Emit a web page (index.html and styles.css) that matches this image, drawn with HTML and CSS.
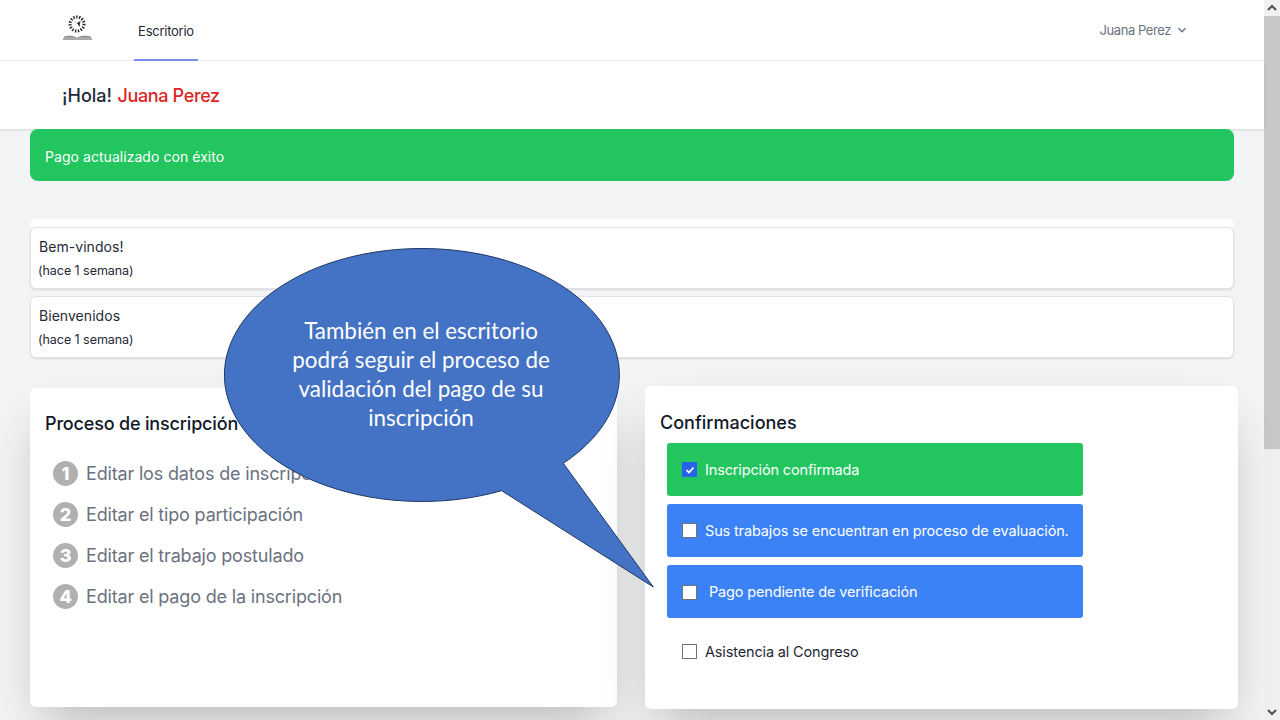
FILE: index.html
```html
<!DOCTYPE html>
<html lang="es">
<head>
<meta charset="utf-8">
<title>Escritorio</title>
<link rel="stylesheet" href="styles.css">
</head>
<body>
<div class="window">
  <div class="page">
    <nav class="nav">
      <div class="logo">
        <svg width="32" height="28" viewBox="0 0 32 28">
          <circle cx="15" cy="11" r="7" fill="none" stroke="#2a2a2a" stroke-width="3" stroke-dasharray="1.4 1.5"/>
          <path d="M10.500 6.500 15 10l3.500-2-1 6-2-3.200z" fill="#333"/>
          <path d="M2 23.500c4-1 9-1 13 1 4-2 9-2 14-1v1.200H2z" fill="#8a8a8a"/>
          <path d="M1 26h29" stroke="#555" stroke-width="1"/>
        </svg>
      </div>
      <a class="nav-link">Escritorio</a>
      <div class="user">Juana Perez
        <svg class="user-chev" width="10" height="10" viewBox="0 0 10 10"><path d="M1.500 3.200 5 6.700l3.500-3.500" fill="none" stroke="#6b7280" stroke-width="1.500"/></svg>
      </div>
    </nav>
    <header class="hero"><h1 class="greet"><span class="hello">¡Hola!</span> <span class="red">Juana Perez</span></h1></header>
    <main class="content">
      <div class="alert">Pago actualizado con éxito</div>
      <section class="notices">
        <div class="notice"><p class="notice-title">Bem-vindos!</p><p class="notice-time">(hace 1 semana)</p></div>
        <div class="notice"><p class="notice-title">Bienvenidos</p><p class="notice-time">(hace 1 semana)</p></div>
      </section>
      <div class="cards">
        <section class="card card-left">
          <h2 class="card-title">Proceso de inscripción</h2>
          <ol class="steps">
            <li class="step"><span class="num">1</span>Editar los datos de inscripción</li>
            <li class="step"><span class="num">2</span>Editar el tipo participación</li>
            <li class="step"><span class="num">3</span>Editar el trabajo postulado</li>
            <li class="step"><span class="num">4</span>Editar el pago de la inscripción</li>
          </ol>
        </section>
        <section class="card card-right">
          <h2 class="card-title conf-title">Confirmaciones</h2>
          <div class="confs">
            <div class="conf green"><span class="box checked"><svg width="10" height="10" viewBox="0 0 10 10"><path d="M1.500 5.200 4 7.500l4.500-5" fill="none" stroke="#fff" stroke-width="1.800"/></svg></span>Inscripción confirmada</div>
            <div class="conf blue"><span class="box"></span>Sus trabajos se encuentran en proceso de evaluación.</div>
            <div class="conf blue pending"><span class="box"></span>Pago pendiente de verificación</div>
            <div class="conf plain"><span class="box"></span>Asistencia al Congreso</div>
          </div>
        </section>
      </div>
    </main>
  </div>
  <div class="scrollbar">
    <div class="sb-btn"><svg width="10" height="8" viewBox="0 0 10 8"><path d="M1 6l4-4 4 4" fill="none" stroke="#505050" stroke-width="2"/></svg></div>
    <div class="sb-thumb"></div>
    <div class="sb-track"></div>
    <div class="sb-btn"><svg width="10" height="8" viewBox="0 0 10 8"><path d="M1 2l4 4 4-4" fill="none" stroke="#505050" stroke-width="2"/></svg></div>
  </div>
  <div class="callout">
    <svg class="callout-shape" width="460" height="360" viewBox="0 0 460 360">
      <path d="M340.300 215.300A197.500 126.500 0 1 0 278.700 242.700L430.300 339Z" fill="#4472c4" stroke="#1f3864" stroke-width="1"/>
    </svg>
    <p class="callout-text">También en el escritorio podrá seguir el proceso de validación del pago de su inscripción</p>
  </div>
</div>
</body>
</html>
```
FILE: styles.css
```css
* { box-sizing: border-box; }
html, body { margin: 0; padding: 0; height: 100%; overflow: hidden; }
body { font-family: Inter, "Liberation Sans", sans-serif; color: #1f2937; }
p, h1, h2, ol { margin: 0; padding: 0; }
.window { position: relative; display: flex; width: 1280px; height: 720px; background: #f3f4f6; overflow: hidden; }
.page { flex: 1; min-width: 0; display: flex; flex-direction: column; }

.nav { height: 61px; flex: none; display: flex; align-items: stretch; background: #fff; border-bottom: 1px solid #f0f1f3; padding-left: 62px; }
.logo { width: 72px; display: flex; align-items: flex-start; padding-top: 13px; }
.nav-link { width: 64px; height: 61px; display: flex; align-items: center; justify-content: center; font-size: 13px; letter-spacing: -.25px; color: #1f2937; border-bottom: 2px solid #818cf8; padding-top: 3px; }
.user { margin-left: auto; margin-right: 77px; display: flex; align-items: center; gap: 6px; font-size: 13px; letter-spacing: -.42px; color: #6b7280; padding-bottom: 1px; }
.user-chev { margin-top: 0; }

.hero { height: 68px; flex: none; display: flex; align-items: center; padding-left: 62px; background: #fff; box-shadow: 0 1px 3px rgba(0,0,0,.12); position: relative; }
.greet { font-size: 18px; font-weight: 500; line-height: 28px; letter-spacing: -.35px; color: #1f2937; padding-top: 1px; }
.hello { letter-spacing: 0; }
.red { color: #dc2626; margin-left: 1px; }

.content { flex: 1; display: flex; flex-direction: column; padding-left: 30px; position: relative; }
.alert { width: 1204px; height: 52px; flex: none; display: flex; align-items: center; padding: 2px 0 0 15px; background: #22c55e; color: #fff; font-size: 14px; letter-spacing: .05px; border-radius: 8px; }

.notices { width: 1204px; height: 146px; flex: none; margin-top: 38px; padding-top: 8px; display: flex; flex-direction: column; gap: 7px; background: linear-gradient(#fff 0, #fff 9px, transparent 9px); border-radius: 6px; }
.notice { height: 62px; flex: none; background: #fff; border: 1px solid #e1e3e8; border-radius: 6px; box-shadow: 0 1px 2px rgba(0,0,0,.12); padding: 8px 8px 0; }
.notice-title { font-size: 14px; line-height: 21px; letter-spacing: .05px; color: #1f2937; }
.notice-time { font-size: 12.500px; line-height: 16px; margin: 6px 0 0 -1px; letter-spacing: -.05px; color: #1f2937; }

.cards { display: flex; align-items: flex-start; margin-top: 21px; }
.card { background: #fff; border-radius: 6px; box-shadow: 0 25px 50px -12px rgba(0,0,0,.25); }
.card-left { width: 587px; height: 319px; padding: 24px 15px 0; margin-top: 2px; }
.card-right { width: 593px; height: 323px; margin-left: 28px; padding: 24px 15px 0; }
.card-title { font-size: 18px; font-weight: 500; line-height: 24px; letter-spacing: -.17px; color: #111827; }
.steps { list-style: none; margin: 17px 0 0 8px; display: flex; flex-direction: column; }
.step { height: 41px; display: flex; align-items: center; gap: 8px; font-size: 18px; letter-spacing: -.17px; color: #6b7280; }
.num { width: 25px; height: 25px; flex: none; border-radius: 50%; background: #b0b0b0; color: #fff; font-size: 18px; font-weight: 800; display: flex; align-items: center; justify-content: center; }

.conf-title { line-height: 24px; letter-spacing: 0; padding-top: 1px; }
.confs { width: 416px; margin: 8px 0 0 7px; display: flex; flex-direction: column; gap: 8px; }
.conf { height: 53px; flex: none; display: flex; align-items: center; padding-left: 15px; gap: 8px; border-radius: 3px; font-size: 14.500px; letter-spacing: -.15px; color: #fff; }
.green { background: #22c55e; }
.blue { background: #3b82f6; }
.plain { color: #1f2937; height: 50px; }
.pending { gap: 12px; padding-bottom: 1px; }
.pending .box { margin-top: 2px; }
.box { width: 15px; height: 15px; flex: none; background: #fff; border: 1px solid #6b7280; display: flex; align-items: center; justify-content: center; }
.checked { background: #2563eb; border-color: #2563eb; }

.scrollbar { width: 16px; flex: none; display: flex; flex-direction: column; background: #f1f1f1; }
.sb-btn { height: 16px; flex: none; display: flex; align-items: center; justify-content: center; }
.sb-thumb { height: 433px; flex: none; background: #c8c8c8; }
.sb-track { flex: 1; }

.callout { position: absolute; left: 223px; top: 248px; width: 396px; height: 254px; }
.callout-shape { position: absolute; left: 0; top: 0; overflow: visible; }
.callout-text { position: absolute; left: 58px; top: 68px; width: 280px; text-align: center; font-family: Lato, "Open Sans", sans-serif; font-size: 22.400px; line-height: 29px; color: #fff; }
```
